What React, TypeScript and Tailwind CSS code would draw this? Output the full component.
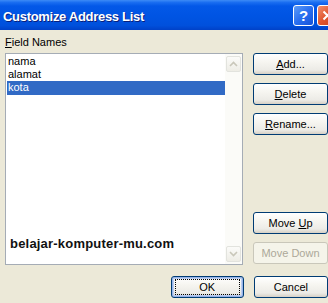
import React from "react";

const font = { fontFamily: '"Liberation Sans", Arial, sans-serif' };

function Btn({ children, disabled, def, w = "w-[75px]" }: { children: React.ReactNode; disabled?: boolean; def?: boolean; w?: string }) {
  if (disabled) {
    return (
      <div className={`${w} h-[22px] rounded-[3px] border border-[#c9c7ba] bg-[#f5f4ea] flex items-center justify-center text-[11px] text-[#aca899]`}>
        <span>{children}</span>
      </div>
    );
  }
  return (
    <div
      className={`${w} h-[22px] rounded-[3px] border border-[#003c74] bg-[linear-gradient(to_bottom,#ffffff_0%,#f6f5f0_40%,#ecebe6_80%,#d6d0c5_100%)] flex items-center justify-center text-[11px] text-black ${def ? "shadow-[inset_0_0_0_1px_#97b4e8,inset_0_0_0_2px_#bccff0]" : ""}`}
    >
      {def ? (
        <div className="w-[65px] h-[16px] border border-dotted border-black flex items-center justify-center">
          <span>{children}</span>
        </div>
      ) : (
        <span>{children}</span>
      )}
    </div>
  );
}

function Arrow({ up }: { up?: boolean }) {
  return (
    <div className="h-[16px] mx-[1px] rounded-[2px] border border-[#e2e3de] bg-[linear-gradient(to_bottom,#fbfbf9,#eeede6)] flex items-center justify-center">
      <svg width="9" height="6" viewBox="0 0 9 6">
        <path d={up ? "M1 5 L4.5 1.5 L8 5" : "M1 1 L4.5 4.5 L8 1"} fill="none" stroke="#c9c7ba" strokeWidth="1.6" />
      </svg>
    </div>
  );
}

export default function App() {
  return (
    <div className="w-[328px] h-[303px] overflow-hidden bg-[#ece9d8]" style={font}>
      {/* title bar */}
      <div className="h-[30px] flex items-center bg-[linear-gradient(to_bottom,#3d8bf6_0%,#1a6ef1_8%,#0358e8_20%,#0054e3_55%,#0050dc_85%,#0041c8_100%)]">
        <div className="flex-1 pl-[3px] pt-[3px] text-[13px] font-bold text-white tracking-[-0.3px] [text-shadow:1px_1px_0_#0a1f7a] whitespace-nowrap">
          Customize Address List
        </div>
        <div className="flex items-center gap-[3px] pt-[1px]">
          <div className="w-[21px] h-[21px] rounded-[3px] border border-white bg-[linear-gradient(135deg,#5d9cf7_0%,#2a6ff0_50%,#1552d8_100%)] flex items-center justify-center text-white font-bold text-[15px] leading-none">
            ?
          </div>
          <div className="w-[21px] h-[21px] mr-[-10px] rounded-[3px] border border-white bg-[linear-gradient(135deg,#f0906e_0%,#e0552f_50%,#c5401c_100%)] flex items-center justify-center">
            <svg width="11" height="11" viewBox="0 0 11 11">
              <path d="M1.5 1.5 L9.5 9.5 M9.5 1.5 L1.5 9.5" stroke="white" strokeWidth="2" />
            </svg>
          </div>
        </div>
      </div>

      {/* body */}
      <div className="pt-[6px] pl-[5px]">
        <div className="flex gap-[10px]">
          <div className="w-[241px] flex flex-col">
            <div className="h-[17px] text-[11px] leading-[13px] text-black">
              <span className="underline">F</span>ield Names
            </div>
            <div className="h-[212px] border border-[#a5acb5] bg-white flex">
              <div className="flex-1 flex flex-col pt-[1px] pl-[1px] pb-[13px] text-[11px] leading-[13px] text-black">
                <div className="h-[13px] pl-[1px]">nama</div>
                <div className="h-[13px] pl-[1px]">alamat</div>
                <div className="h-[14px] pl-[1px] bg-[#316ac5] text-white">kota</div>
                <div className="mt-auto pl-[3px] text-[13px] leading-[15px] font-bold text-[#111] tracking-[0.2px] whitespace-nowrap">
                  belajar-komputer-mu.com
                </div>
              </div>
              <div className="w-[17px] bg-[#fbfbf8] flex flex-col justify-between pt-[2px] pb-[2px]">
                <Arrow up />
                <Arrow />
              </div>
            </div>
          </div>
          <div className="flex flex-col pt-[17px]">
            <Btn>
              <span className="underline">A</span>dd...
            </Btn>
            <div className="mt-[8px]">
              <Btn>
                <span className="underline">D</span>elete
              </Btn>
            </div>
            <div className="mt-[8px]">
              <Btn>
                <span className="underline">R</span>ename...
              </Btn>
            </div>
            <div className="mt-[77px]">
              <Btn>
                Move <span className="underline">U</span>p
              </Btn>
            </div>
            <div className="mt-[8px]">
              <Btn disabled>Move Down</Btn>
            </div>
          </div>
        </div>
        <div className="flex gap-[10px] mt-[11px]">
          <div className="w-[241px] flex justify-end">
            <Btn def w="w-[73px]">
              OK
            </Btn>
          </div>
          <Btn>Cancel</Btn>
        </div>
      </div>
    </div>
  );
}
